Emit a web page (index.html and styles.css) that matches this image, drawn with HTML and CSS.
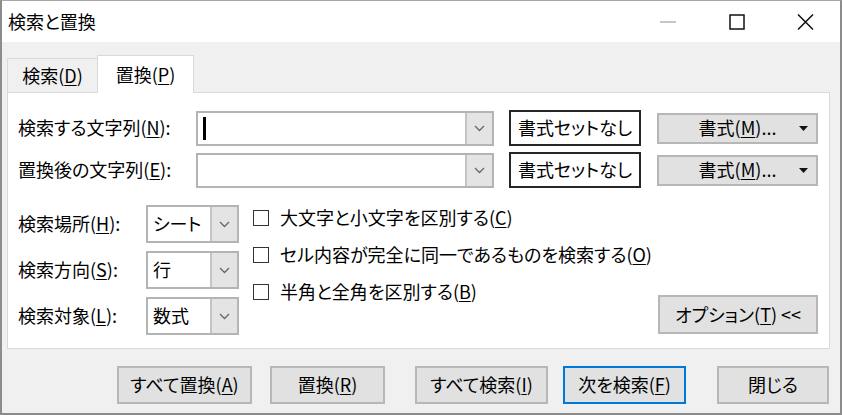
FILE: index.html
```html
<!DOCTYPE html>
<html lang="ja">
<head>
    <meta charset="UTF-8">
    <meta name="viewport" content="width=device-width, initial-scale=1.0">
    <title>検索と置換</title>
    <link rel="stylesheet" href="styles.css">
</head>
<body>
    <div class="window">
        <div class="titlebar">
            <span class="title">検索と置換</span>
            <div class="caption">
                <span class="cap-btn">
                    <svg width="16" height="2" viewBox="0 0 16 2"><line x1="0" y1="1" x2="16" y2="1" stroke="#b3b3b3" stroke-width="1.5"/></svg>
                </span>
                <span class="cap-btn">
                    <svg width="16" height="16" viewBox="0 0 16 16"><rect x="1" y="1" width="14" height="14" fill="none" stroke="#111" stroke-width="1.5"/></svg>
                </span>
                <span class="cap-btn">
                    <svg width="17" height="16" viewBox="0 0 17 16"><path d="M1 0.5 L16 15.5 M16 0.5 L1 15.5" stroke="#111" stroke-width="1.5" fill="none"/></svg>
                </span>
            </div>
        </div>

        <div class="content">
            <div class="tabs">
                <div class="tab">検索(<u>D</u>)</div>
                <div class="tab active">置換(<u>P</u>)</div>
            </div>

            <div class="panel">
                <div class="find-row">
                    <label class="row-label">検索する文字列(<u>N</u>):</label>
                    <div class="combo wide">
                        <span class="combo-text"><span class="caret"></span></span>
                        <span class="combo-btn"><svg width="11" height="7" viewBox="0 0 11 7"><polyline points="1,1 5.5,5.5 10,1" fill="none" stroke="#666" stroke-width="1.3"/></svg></span>
                    </div>
                    <div class="preview">書式セットなし</div>
                    <button class="btn fmt-btn"><span></span><span>書式(<u>M</u>)...</span><svg class="tri" width="9" height="5" viewBox="0 0 9 5"><polygon points="0,0 9,0 4.5,5" fill="#111"/></svg></button>
                </div>
                <div class="find-row">
                    <label class="row-label">置換後の文字列(<u>E</u>):</label>
                    <div class="combo wide">
                        <span class="combo-text"></span>
                        <span class="combo-btn"><svg width="11" height="7" viewBox="0 0 11 7"><polyline points="1,1 5.5,5.5 10,1" fill="none" stroke="#666" stroke-width="1.3"/></svg></span>
                    </div>
                    <div class="preview">書式セットなし</div>
                    <button class="btn fmt-btn"><span></span><span>書式(<u>M</u>)...</span><svg class="tri" width="9" height="5" viewBox="0 0 9 5"><polygon points="0,0 9,0 4.5,5" fill="#111"/></svg></button>
                </div>

                <div class="options">
                    <div class="scope">
                        <div class="scope-row">
                            <label class="scope-label">検索場所(<u>H</u>):</label>
                            <div class="combo small">
                                <span class="combo-text">シート</span>
                                <span class="combo-btn"><svg width="11" height="7" viewBox="0 0 11 7"><polyline points="1,1 5.5,5.5 10,1" fill="none" stroke="#666" stroke-width="1.3"/></svg></span>
                            </div>
                        </div>
                        <div class="scope-row">
                            <label class="scope-label">検索方向(<u>S</u>):</label>
                            <div class="combo small">
                                <span class="combo-text">行</span>
                                <span class="combo-btn"><svg width="11" height="7" viewBox="0 0 11 7"><polyline points="1,1 5.5,5.5 10,1" fill="none" stroke="#666" stroke-width="1.3"/></svg></span>
                            </div>
                        </div>
                        <div class="scope-row">
                            <label class="scope-label">検索対象(<u>L</u>):</label>
                            <div class="combo small">
                                <span class="combo-text">数式</span>
                                <span class="combo-btn"><svg width="11" height="7" viewBox="0 0 11 7"><polyline points="1,1 5.5,5.5 10,1" fill="none" stroke="#666" stroke-width="1.3"/></svg></span>
                            </div>
                        </div>
                    </div>

                    <div class="checks">
                        <label class="check-row"><span class="checkbox"></span><span>大文字と小文字を区別する(<u>C</u>)</span></label>
                        <label class="check-row"><span class="checkbox"></span><span>セル内容が完全に同一であるものを検索する(<u>O</u>)</span></label>
                        <label class="check-row"><span class="checkbox"></span><span>半角と全角を区別する(<u>B</u>)</span></label>
                    </div>

                    <button class="btn opt-btn">オプション(<u>T</u>) &lt;&lt;</button>
                </div>
            </div>

            <div class="actions">
                <button class="btn act-replace-all">すべて置換(<u>A</u>)</button>
                <button class="btn act-replace">置換(<u>R</u>)</button>
                <button class="btn act-find-all">すべて検索(<u>I</u>)</button>
                <button class="btn act-find-next">次を検索(<u>F</u>)</button>
                <button class="btn act-close">閉じる</button>
            </div>
        </div>
    </div>
</body>
</html>
```

FILE: styles.css
```css
body {
    margin: 0;
    font-family: "Noto Sans CJK JP", "Noto Sans", sans-serif;
    font-size: 18px;
    line-height: 1.2;
    font-feature-settings: "palt";
    color: #000;
    background: #fff;
}
u {
    text-underline-offset: 2px;
}
.window {
    width: 842px;
    height: 415px;
    box-sizing: border-box;
    border: 2px solid #8c8c8c;
    border-top: 1px solid #a6a6a6;
    background-color: #f0f0f0;
    display: flex;
    flex-direction: column;
}
.titlebar {
    height: 41px;
    background-color: #fff;
    display: flex;
    align-items: center;
}
.title {
    padding-left: 6px;
}
.caption {
    margin-left: auto;
    display: flex;
    height: 100%;
}
.cap-btn {
    width: 69px;
    display: flex;
    align-items: center;
    justify-content: center;
}
.content {
    flex: 1;
    padding: 13px 0 0 5px;
}
.tabs {
    display: flex;
    align-items: flex-end;
    height: 37px;
}
.tab {
    width: 91px;
    height: 34px;
    box-sizing: border-box;
    border: 1px solid #d9d9d9;
    border-bottom: none;
    display: flex;
    align-items: center;
    justify-content: center;
}
.tab.active {
    width: 97px;
    height: 38px;
    margin-left: -1px;
    margin-bottom: -1px;
    background-color: #fff;
    position: relative;
    z-index: 1;
}
.panel {
    width: 823px;
    height: 257px;
    box-sizing: border-box;
    border: 1px solid #d9d9d9;
    background-color: #fff;
    padding: 17px 11px 0 10px;
}
.find-row {
    display: flex;
    align-items: center;
    height: 36px;
    margin-bottom: 6px;
}
.row-label {
    width: 178px;
}
.combo {
    display: flex;
    height: 35px;
    box-sizing: border-box;
    border: 2px solid #b4b4b4;
    background-color: #fff;
}
.combo.wide {
    width: 298px;
}
.combo.small {
    width: 93px;
    height: 38px;
}
.combo-text {
    flex: 1;
    display: flex;
    align-items: center;
    padding-left: 5px;
    white-space: nowrap;
}
.caret {
    width: 3px;
    height: 23px;
    background-color: #000;
}
.combo-btn {
    width: 25px;
    background-color: #e4e4e4;
    border-left: 2px solid #c4c4c4;
    display: flex;
    align-items: center;
    justify-content: center;
}
.preview {
    width: 132px;
    height: 36px;
    box-sizing: border-box;
    margin-left: 15px;
    border: 2px solid #262626;
    display: flex;
    align-items: center;
    justify-content: center;
    white-space: nowrap;
}
.btn {
    font-family: inherit;
    font-size: 18px;
    line-height: 1.2;
    font-feature-settings: "palt";
    color: #000;
    background-color: #e1e1e1;
    border: 2px solid #b7b7b7;
    padding: 0;
    box-sizing: border-box;
    white-space: nowrap;
}
.fmt-btn {
    width: 161px;
    height: 31px;
    margin-left: 16px;
    display: grid;
    grid-template-columns: 1fr auto 1fr;
    align-items: center;
}
.fmt-btn .tri {
    justify-self: end;
    margin-right: 8px;
}
.options {
    display: flex;
    margin-top: 12px;
}
.scope {
    padding-top: 5px;
    display: flex;
    flex-direction: column;
    gap: 8px;
}
.scope-row {
    display: flex;
    align-items: center;
}
.scope-label {
    width: 128px;
}
.checks {
    margin-left: 14px;
    display: flex;
    flex-direction: column;
}
.check-row {
    height: 38px;
    display: flex;
    align-items: center;
    margin-top: -1px;
    white-space: nowrap;
}
.checkbox {
    flex-shrink: 0;
    width: 16px;
    height: 16px;
    box-sizing: border-box;
    border: 1.5px solid #333;
    margin-right: 11px;
}
.opt-btn {
    width: 160px;
    height: 39px;
    margin-left: auto;
    align-self: flex-end;
    margin-bottom: 1px;
}
.actions {
    display: flex;
    padding: 17px 0 0 110px;
}
.actions .btn {
    height: 38px;
}
.act-replace-all {
    width: 135px;
}
.act-replace {
    width: 115px;
    margin-left: 18px;
}
.act-find-all {
    width: 133px;
    margin-left: 30px;
}
.act-find-next {
    width: 123px;
    margin-left: 15px;
    border-color: #0078d7;
}
.act-close {
    width: 112px;
    margin-left: 31px;
}
```
